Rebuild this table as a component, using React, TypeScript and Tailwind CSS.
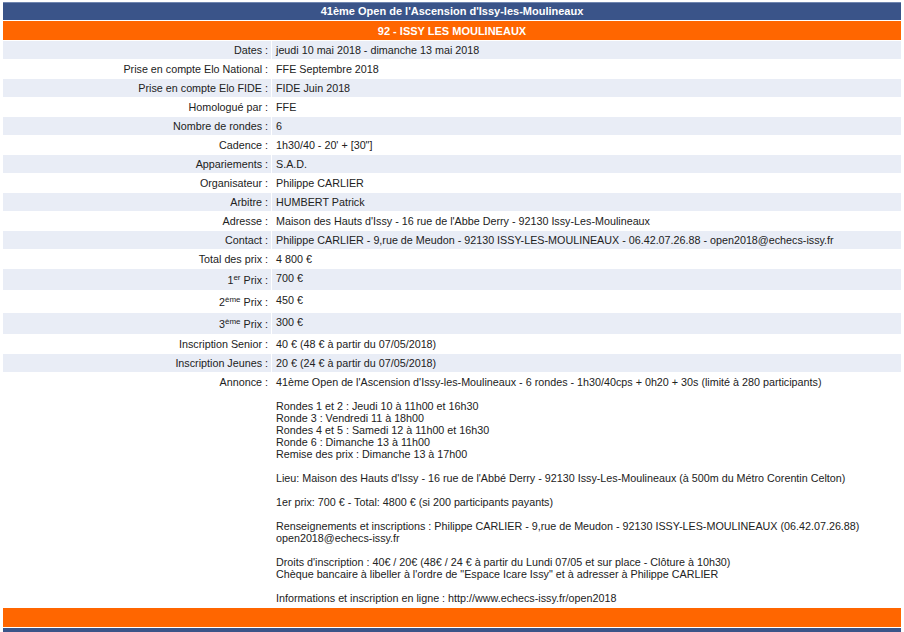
import React from "react";

type Row = { label: React.ReactNode; value: React.ReactNode; sup?: boolean };

const Sup = ({ children }: { children: React.ReactNode }) => (
  <sup className="text-[8px]">{children}</sup>
);

const rows: Row[] = [
  { label: "Dates :", value: "jeudi 10 mai 2018 - dimanche 13 mai 2018" },
  { label: "Prise en compte Elo National :", value: "FFE Septembre 2018" },
  { label: "Prise en compte Elo FIDE :", value: "FIDE Juin 2018" },
  { label: "Homologué par :", value: "FFE" },
  { label: "Nombre de rondes :", value: "6" },
  { label: "Cadence :", value: "1h30/40 - 20' + [30\"]" },
  { label: "Appariements :", value: "S.A.D." },
  { label: "Organisateur :", value: "Philippe CARLIER" },
  { label: "Arbitre :", value: "HUMBERT Patrick" },
  { label: "Adresse :", value: "Maison des Hauts d'Issy - 16 rue de l'Abbe Derry - 92130 Issy-Les-Moulineaux" },
  {
    label: "Contact :",
    value: "Philippe CARLIER - 9,rue de Meudon - 92130 ISSY-LES-MOULINEAUX - 06.42.07.26.88 - open2018@echecs-issy.fr",
  },
  { label: "Total des prix :", value: "4 800 €" },
  {
    label: (
      <>
        1<Sup>er</Sup> Prix :
      </>
    ),
    value: "700 €",
    sup: true,
  },
  {
    label: (
      <>
        2<Sup>ème</Sup> Prix :
      </>
    ),
    value: "450 €",
    sup: true,
  },
  {
    label: (
      <>
        3<Sup>ème</Sup> Prix :
      </>
    ),
    value: "300 €",
    sup: true,
  },
  { label: "Inscription Senior :", value: "40 € (48 € à partir du 07/05/2018)" },
  { label: "Inscription Jeunes :", value: "20 € (24 € à partir du 07/05/2018)" },
];

export default function App() {
  return (
    <div
      className="bg-white px-[2px] pt-[1px] text-[10.75px] leading-[12px] text-[#222]"
      style={{ fontFamily: '"Liberation Sans", Arial, sans-serif' }}
    >
      <table className="w-full border-separate border-spacing-[1px]">
        <tbody>
          <tr>
            <td
              colSpan={2}
              className="h-[18px] bg-[#3a5489] border-t border-[#7086b0] text-center text-[11px] font-bold text-white px-[3px] pt-[2px] pb-[3px]"
            >
              41ème Open de l'Ascension d'Issy-les-Moulineaux
            </td>
          </tr>
          <tr>
            <td colSpan={2} className="h-[19px] bg-[#ff6600] text-center text-[11px] font-bold text-white px-[3px] py-[3px]">
              92 - ISSY LES MOULINEAUX
            </td>
          </tr>
          {rows.map((r, i) => (
            <tr key={i} className={i % 2 === 0 ? "bg-[#e9edf6]" : "bg-white"}>
              <td
                className={
                  r.sup
                    ? "w-[268px] text-right align-top pl-[3px] pr-[3px] pt-[5px] pb-[4px] whitespace-nowrap"
                    : "w-[268px] text-right align-top pl-[3px] pr-[3px] py-[3px] whitespace-nowrap"
                }
              >
                {r.label}
              </td>
              <td className="text-left align-top pl-[4px] pr-[3px] py-[3px]">{r.value}</td>
            </tr>
          ))}
          <tr className="bg-white">
            <td className="w-[268px] text-right align-top pl-[3px] pr-[3px] py-[3px] whitespace-nowrap">Annonce :</td>
            <td className="text-left align-top pl-[4px] pr-[3px] py-[3px]">
              41ème Open de l'Ascension d'Issy-les-Moulineaux - 6 rondes - 1h30/40cps + 0h20 + 30s (limité à 280 participants)
              <br />
              <br />
              Rondes 1 et 2 : Jeudi 10 à 11h00 et 16h30
              <br />
              Ronde 3 : Vendredi 11 à 18h00
              <br />
              Rondes 4 et 5 : Samedi 12 à 11h00 et 16h30
              <br />
              Ronde 6 : Dimanche 13 à 11h00
              <br />
              Remise des prix : Dimanche 13 à 17h00
              <br />
              <br />
              Lieu: Maison des Hauts d'Issy - 16 rue de l'Abbé Derry - 92130 Issy-Les-Moulineaux (à 500m du Métro Corentin Celton)
              <br />
              <br />
              1er prix: 700 € - Total: 4800 € (si 200 participants payants)
              <br />
              <br />
              Renseignements et inscriptions : Philippe CARLIER - 9,rue de Meudon - 92130 ISSY-LES-MOULINEAUX (06.42.07.26.88)
              <br />
              open2018@echecs-issy.fr
              <br />
              <br />
              Droits d'inscription : 40€ / 20€ (48€ / 24 € à partir du Lundi 07/05 et sur place - Clôture à 10h30)
              <br />
              Chèque bancaire à libeller à l'ordre de "Espace Icare Issy" et à adresser à Philippe CARLIER
              <br />
              <br />
              Informations et inscription en ligne : http://www.echecs-issy.fr/open2018
            </td>
          </tr>
          <tr>
            <td colSpan={2} className="h-[19px] bg-[#ff6600]"></td>
          </tr>
          <tr>
            <td colSpan={2} className="h-[19px] bg-[#3a5489]"></td>
          </tr>
        </tbody>
      </table>
    </div>
  );
}
